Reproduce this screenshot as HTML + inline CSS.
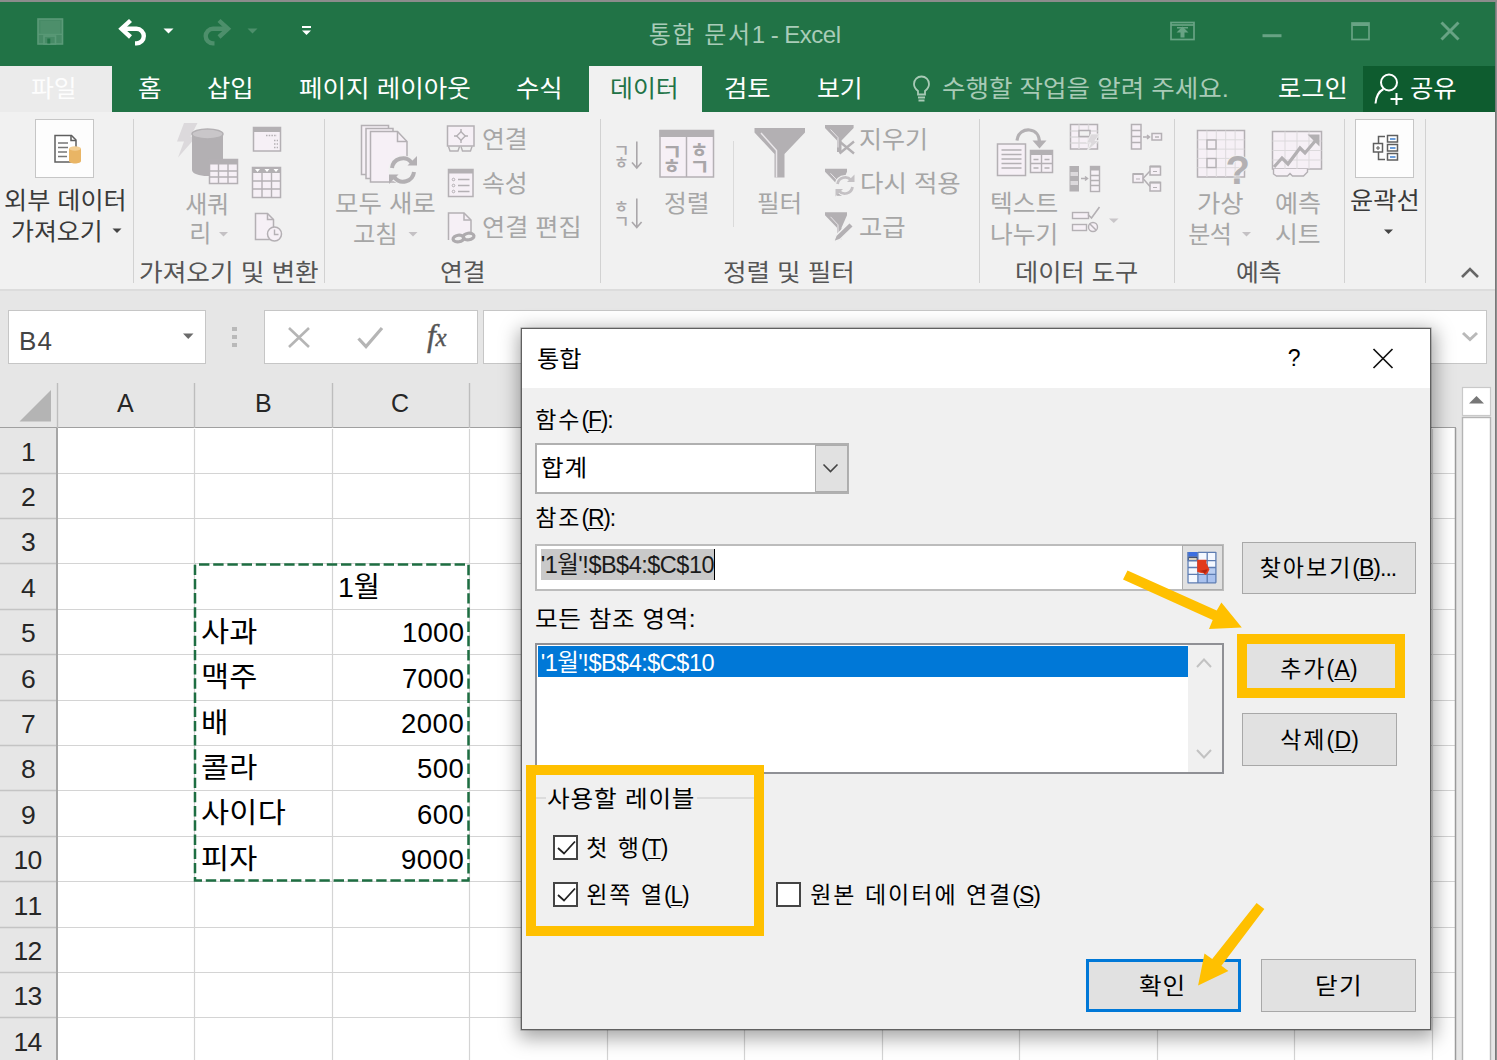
<!DOCTYPE html>
<html lang="ko">
<head>
<meta charset="utf-8">
<title>통합 문서1 - Excel</title>
<style>
*{box-sizing:border-box;margin:0;padding:0}
html,body{width:1497px;height:1060px;overflow:hidden}
body{position:relative;background:#e6e6e6;font-family:"Liberation Sans","Noto Sans CJK KR",sans-serif;color:#262626}
.abs{position:absolute}
.t{position:absolute;white-space:nowrap;line-height:1}
u{text-decoration:underline;text-underline-offset:2px;text-decoration-thickness:1.300px}
.h{letter-spacing:2px}
#topline{left:0;top:0;width:1497px;height:2px;background:#8c8c8c}
#title{left:0;top:2px;width:1497px;height:110px;background:#217346}
#filetab{left:0;top:66px;width:112px;height:46px;background:#ebebeb}
#datatab{left:589px;top:66px;width:113px;height:47px;background:#f1f1f1}
#share{left:1363px;top:66px;width:132px;height:46px;background:#0e5c2f}
#ribbon{left:0;top:112px;width:1497px;height:177px;background:#f1f1f1}
#ribbonline{left:0;top:289px;width:1497px;height:1.500px;background:#dcdcdc}
.sep{position:absolute;top:119px;width:1px;height:164px;background:#d2d2d2}
.box{position:absolute;background:#fff;border:1px solid #c6c6c6}
#grid{left:58px;top:428px;width:1398px;height:632px;background:#fff}
.vl{position:absolute;width:1px;background:#d4d4d4;top:428px;height:632px}
.hl{position:absolute;height:1px;background:#d4d4d4;left:58px;width:1398px}
.hvl{position:absolute;width:1px;background:#c3c3c3;top:384px;height:44px}
.hhl{position:absolute;height:1px;background:#c3c3c3;left:0;width:57px}
#dlg{left:521px;top:328px;width:910px;height:702px;background:#f0f0f0;border:1px solid #606060;box-shadow:0 0 0 .600px rgba(0,0,0,.28),1px 5px 18px 3px rgba(0,0,0,.36)}
#dlgtitle{left:522px;top:329px;width:908px;height:59px;background:#fff}
.btn{position:absolute;background:#e1e1e1;border:1.500px solid #a8a8a8}
.hi{position:absolute;border:8px solid #ffc000}
.chk{position:absolute;width:26px;height:26px;background:#fff;border:1.500px solid #333}
</style>
</head>
<body>
<div class="abs" id="title"></div>
<div class="abs" id="topline"></div>
<div class="abs" id="filetab"></div>
<div class="abs" id="datatab"></div>
<div class="abs" id="share"></div>
<svg class="abs" style="left:30px;top:14px" width="300" height="40" viewBox="0 0 300 40">
  <rect x="8" y="5" width="24.500" height="25" fill="#478a66" stroke="#5b9a78" stroke-width="1.600"/>
  <rect x="10.500" y="7" width="19.500" height="12.500" fill="#4d8f6b"/>
  <path d="M8 20.300h24.500" stroke="#5b9a78" stroke-width="1.200"/>
  <rect x="14" y="22" width="11.500" height="8" fill="#478a66" stroke="#5b9a78" stroke-width="1.600"/>
  <rect x="17.300" y="24.500" width="3" height="5" fill="#217346"/>
  <g fill="none" stroke="#fff" stroke-width="4.400" stroke-linejoin="miter">
    <path d="M100.500 6.500 L91.500 14.800 L100.500 23" />
    <path d="M93 14.800 H106.500 a7.300 7.300 0 0 1 0 14.600 H105" />
  </g>
  <path d="M133.500 14.500h10l-5 5z" fill="#fff"/>
  <g fill="none" stroke="#4d8f6b" stroke-width="4.400">
    <path d="M189 6.500 L198 14.800 L189 23" />
    <path d="M196.500 14.800 H183 a7.300 7.300 0 0 0 0 14.600 H184.500" />
  </g>
  <path d="M217.500 14.500h10l-5 5z" fill="#4d8f6b"/>
  <rect x="272" y="12" width="9" height="2" fill="#fff"/>
  <path d="M272 16.500h9l-4.500 4.500z" fill="#fff"/>
</svg>
<svg class="abs" style="left:1160px;top:14px" width="320" height="40" viewBox="0 0 320 40">
  <g fill="none" stroke="#68a384" stroke-width="1.700">
    <rect x="11" y="8.500" width="23" height="17"/>
    <path d="M11 11h23"/>
    <path d="M102.500 21.700h19" stroke-width="3"/>
    <rect x="192" y="9" width="17" height="16.500"/>
    <path d="M192 10.500h17" stroke-width="3"/>
    <path d="M281.500 8.500 l17 17 M298.500 8.500 l-17 17" stroke-width="3"/>
  </g>
  <path d="M22.500 12.500l6 6h-4v5h-4v-5h-4z" fill="#68a384"/>
  <rect x="17" y="13" width="11" height="1.500" fill="#68a384"/>
</svg>
<svg class="abs" style="left:908px;top:72px" width="28" height="34" viewBox="0 0 28 34">
  <g fill="none" stroke="#a8cab6" stroke-width="1.800">
    <path d="M10 22.500v-3.500c-2.500-2-4-4-4-7a7.500 7.500 0 0 1 15 0c0 3-1.500 5-4 7v3.500z"/>
    <path d="M10 25.500h7M10.500 28.500h6"/>
  </g>
</svg>
<svg class="abs" style="left:1372px;top:70px" width="36" height="38" viewBox="0 0 36 38">
  <g fill="none" stroke="#fff" stroke-width="2">
    <circle cx="17" cy="12.500" r="8"/>
    <path d="M11.500 19 C6 22 4 27 3.500 33.500"/>
    <path d="M24.500 23v12M18.500 29h12"/>
  </g>
</svg>
<div class="t" style="left:648.7px;top:23.2px;font-size:24px;color:#a9ccb8;letter-spacing:-0.50px;"><span style="letter-spacing:1.600px">통합 문서</span>1 - Excel</div><div class="t" style="left:31.2px;top:76.7px;font-size:24px;color:#fdfdfd;letter-spacing:0.00px;transform:scaleX(1.034);transform-origin:0 50%;">파일</div><div class="t" style="left:138.2px;top:76.7px;font-size:24px;color:#fff;letter-spacing:1.00px;transform:scaleX(1.070);transform-origin:0 50%;">홈</div><div class="t" style="left:207.2px;top:76.7px;font-size:24px;color:#fff;letter-spacing:0.00px;transform:scaleX(1.057);transform-origin:0 50%;">삽입</div><div class="t" style="left:299.2px;top:76.7px;font-size:24px;color:#fff;letter-spacing:0.00px;transform:scaleX(1.065);transform-origin:0 50%;">페이지 레이아웃</div><div class="t" style="left:516.2px;top:76.7px;font-size:24px;color:#fff;letter-spacing:0.00px;transform:scaleX(1.057);transform-origin:0 50%;">수식</div><div class="t" style="left:610.2px;top:76.7px;font-size:24px;color:#217346;letter-spacing:0.00px;transform:scaleX(1.037);transform-origin:0 50%;">데이터</div><div class="t" style="left:724.2px;top:76.7px;font-size:24px;color:#fff;letter-spacing:0.00px;transform:scaleX(1.057);transform-origin:0 50%;">검토</div><div class="t" style="left:817.2px;top:76.7px;font-size:24px;color:#fff;letter-spacing:0.00px;transform:scaleX(1.034);transform-origin:0 50%;">보기</div><div class="t" style="left:942.2px;top:76.7px;font-size:24px;color:#a8cab6;letter-spacing:0.00px;transform:scaleX(1.064);transform-origin:0 50%;">수행할 작업을 알려 주세요.</div><div class="t" style="left:1278.2px;top:76.7px;font-size:24px;color:#fff;letter-spacing:0.00px;transform:scaleX(1.052);transform-origin:0 50%;">로그인</div><div class="t" style="left:1410.2px;top:76.7px;font-size:24px;color:#fff;letter-spacing:0.00px;transform:scaleX(1.057);transform-origin:0 50%;">공유</div><div class="abs" id="ribbon"></div>
<div class="abs" id="ribbonline"></div>
<div class="sep" style="left:133px"></div>
<div class="sep" style="left:324px"></div>
<div class="sep" style="left:600px"></div>
<div class="sep" style="left:979px"></div>
<div class="sep" style="left:1174px"></div>
<div class="sep" style="left:1344px"></div>
<div class="sep" style="left:1425px"></div>
<div class="abs" style="left:733px;top:141px;width:1px;height:86px;background:#dadada"></div>
<div class="box" style="left:35px;top:119px;width:59px;height:59px;background:#fdfdfd"></div>
<div class="box" style="left:1355px;top:119px;width:59px;height:59px;background:#fdfdfd"></div>
<svg class="abs" style="left:0;top:0" width="1497" height="300" viewBox="0 0 1497 300" font-family="Liberation Sans, Noto Sans CJK KR, sans-serif">
<g fill="none" stroke="#5f5f5f" stroke-width="1.500">
<path d="M55 135.500h16.500l4.500 4.500v22h-21z" fill="#fff"/>
<path d="M71 135.500v5h5"/>
<path d="M58 143h10M58 147.500h10M58 152h9M58 156.500h9" stroke="#777" stroke-width="1.400"/>
</g>
<path d="M69 148.500v12.500c0 1.500 2.700 2.500 6 2.500s6-1 6-2.500v-12.500z" fill="#e9b565"/>
<ellipse cx="75" cy="148.500" rx="6" ry="2.200" fill="#f3cf94"/>
<path d="M184 123h13.500l-7 13.500h6l-18.500 21l6-16h-7z" fill="#dcd9dc"/>
<path d="M192 134v36c0 3.500 7 6 15.500 6s15.500-2.500 15.500-6v-36z" fill="#b3b0b3"/>
<ellipse cx="207.500" cy="134" rx="15.500" ry="5" fill="#c9c6c9" stroke="#b3b0b3" stroke-width="1.500"/>
<rect x="209.500" y="159.500" width="28" height="24" fill="#f6f0f6" stroke="#b4b0b4" stroke-width="1.500"/>
<rect x="209.500" y="159.500" width="28" height="5" fill="#b3b0b3"/>
<path d="M209.500 171h28M209.500 177h28M218.500 164v19.500M228 164v19.500" stroke="#b4b0b4" stroke-width="1.400"/>
<rect x="253.500" y="127.500" width="27" height="23.500" fill="#f6f0f6" stroke="#b4b0b4" stroke-width="1.500"/>
<rect x="253.500" y="127.500" width="27" height="4.500" fill="#b3b0b3"/>
<path d="M266 135.500h11M274 140.500h4M274 144h4M274 147.500h4" stroke="#b4b0b4" stroke-width="1.400" stroke-dasharray="1.500 1.200"/>
<rect x="252.500" y="167.500" width="28" height="30" fill="#f6f0f6" stroke="#b4b0b4" stroke-width="1.500"/>
<rect x="252.500" y="167.500" width="28" height="5.500" fill="#b3b0b3"/>
<path d="M252.500 181h28M252.500 189h28M262 173v24.500M271.500 173v24.500" stroke="#b4b0b4" stroke-width="1.400"/>
<path d="M255 169h5l-2.500 3zM264.500 169h5l-2.500 3zM273.500 169h5l-2.500 3z" fill="#fff"/>
<path d="M255.500 213.500h12l6 6v20h-18z" fill="#f6f0f6" stroke="#b4b0b4" stroke-width="1.500"/>
<path d="M267.500 213.500v6h6" fill="none" stroke="#b4b0b4" stroke-width="1.500"/>
<circle cx="274.500" cy="234" r="7" fill="#f6f0f6" stroke="#b4b0b4" stroke-width="1.500"/>
<path d="M274.500 229.500v5h4" fill="none" stroke="#b4b0b4" stroke-width="1.400"/>
<path d="M361.500 125.500h27v49h-27z" fill="#f6f0f6" stroke="#b4b0b4" stroke-width="1.500"/>
<path d="M366 128.500h27v50h-27z" fill="#f6f0f6" stroke="#b4b0b4" stroke-width="1.500"/>
<path d="M370.500 131.500h27l9.500 10v40.500h-36.500z" fill="#f6f0f6" stroke="#b4b0b4" stroke-width="1.500"/>
<path d="M397.500 131.500v10h9.500" fill="none" stroke="#b4b0b4" stroke-width="1.500"/>
<circle cx="403" cy="170" r="14.500" fill="#f1f1f1"/>
<g fill="none" stroke="#b3b0b3" stroke-width="4">
<path d="M392 168a11 11 0 0 1 19.500-5.500"/>
<path d="M414 172a11 11 0 0 1-19.500 5.500"/>
</g>
<path d="M407.500 165.500h9.500v-9.500z" fill="#b3b0b3"/>
<path d="M398.500 174.500h-9.500v9.500z" fill="#b3b0b3"/>
<rect x="447.500" y="126" width="26.500" height="20" fill="#f6f0f6" stroke="#b4b0b4" stroke-width="1.500"/>
<path d="M448.500 146.500l1.500 4.500h8l1.500-4.500M461 146.500l1.500 4.500h8l1.500-4.500" fill="none" stroke="#b4b0b4" stroke-width="1.400"/>
<path d="M461 129v14M454 136h14" stroke="#b4b0b4" stroke-width="1.400"/>
<rect x="458" y="133" width="6" height="6" fill="#f6f0f6" stroke="#b4b0b4" stroke-width="1.400" transform="rotate(45 461 136)"/>
<rect x="448.500" y="169.500" width="24.500" height="27" fill="#f6f0f6" stroke="#b4b0b4" stroke-width="1.500"/>
<rect x="448.500" y="169.500" width="24.500" height="4" fill="#b3b0b3"/>
<path d="M458 179.500h11.500M458 185.500h11.500M458 191.500h11.500" stroke="#b4b0b4" stroke-width="1.500"/>
<circle cx="453.500" cy="179.500" r="1.300" fill="none" stroke="#b4b0b4"/><circle cx="453.500" cy="185.500" r="1.300" fill="none" stroke="#b4b0b4"/><circle cx="453.500" cy="191.500" r="1.300" fill="none" stroke="#b4b0b4"/>
<path d="M448.500 240v-27h15.500l7 7v14" fill="#f6f0f6" stroke="#b4b0b4" stroke-width="1.500"/>
<path d="M464 213v7h7" fill="none" stroke="#b4b0b4" stroke-width="1.500"/>
<g fill="none" stroke="#aeabae" stroke-width="3.200">
<ellipse cx="458.500" cy="238.500" rx="5.500" ry="3.300" transform="rotate(-8 458.500 238.500)"/>
<ellipse cx="468.500" cy="236.500" rx="5.500" ry="3.300" transform="rotate(-8 468.500 236.500)"/>
</g>
<g fill="#aaa7aa" font-size="17.500" font-weight="500">
<text x="613.500" y="156.500">ㄱ</text><text x="613.800" y="169" font-size="16.500">ㅎ</text>
<text x="613.800" y="212.500" font-size="16.500">ㅎ</text><text x="613.500" y="227.500">ㄱ</text>
</g>
<g fill="none" stroke="#aaa7aa" stroke-width="1.600">
<path d="M636.800 141.500v26M632 162.500l4.800 5.500l4.800-5.500"/>
<path d="M636.800 198.500v29M632 222l4.800 5.500l4.800-5.500"/>
</g>
<rect x="660" y="130.500" width="53.500" height="46.500" fill="#f6f0f6" stroke="#b4b0b4" stroke-width="1.500"/>
<rect x="659.500" y="130" width="54.500" height="7" fill="#b3b0b3"/>
<path d="M686.500 137v40" stroke="#b4b0b4" stroke-width="1.500"/>
<g fill="#a9a6a9" font-size="22" font-weight="bold">
<text x="662" y="160">ㄱ</text><text x="662.500" y="174" font-size="20">ㅎ</text>
<text x="690" y="158" font-size="20">ㅎ</text><text x="689.500" y="174.500">ㄱ</text>
</g>
<path d="M754.500 128h50.500v4.500l-20.500 21.500v23.500h-10v-23.500l-20-21.500z" fill="#b3b0b3"/>
<path d="M761 133l15.500 17.500v27" fill="none" stroke="#e9e6e9" stroke-width="1.500"/>
<path d="M825 125.0h28.6v3l-12.1 12.500v11.500h-4.500v-11.500l-12-12.500z" fill="#b3b0b3"/>
<path d="M830.500 129.5l7.500 8v10" fill="none" stroke="#e9e6e9" stroke-width="1"/>
<path d="M839.500 141.500l14.500 12M854 141.500l-14.500 12" stroke="#b3b0b3" stroke-width="2.400" fill="none"/>
<path d="M825 168.8h22.0v3l-5.5 12.500v11.500h-4.500v-11.500l-12-12.500z" fill="#b3b0b3"/>
<path d="M830.500 173.3l7.500 8v10" fill="none" stroke="#e9e6e9" stroke-width="1"/>
<circle cx="845" cy="185.500" r="10.500" fill="#f1f1f1"/><g fill="none" stroke="#c4c1c4" stroke-width="2.800"><path d="M837.500 184a7.800 7.800 0 0 1 13.500-4"/><path d="M852.500 187a7.800 7.800 0 0 1-13.500 4"/></g>
<path d="M847 182h7.500v-7.500z" fill="#c4c1c4"/><path d="M843 189h-7.500v7.500z" fill="#c4c1c4"/>
<path d="M825 212.3h22.0v3l-5.5 12.500v11.500h-4.500v-11.500l-12-12.500z" fill="#b3b0b3"/>
<path d="M830.500 216.8l7.500 8v10" fill="none" stroke="#e9e6e9" stroke-width="1"/>
<path d="M833.500 242l2.500-6.500l13.500-13l4 4l-13.500 13z" fill="#b3b0b3" stroke="#f1f1f1" stroke-width="1.400"/>
<rect x="997.500" y="144" width="28" height="31.500" fill="#f6f0f6" stroke="#b4b0b4" stroke-width="1.500"/>
<path d="M1001.500 150h20M1001.500 154.500h20M1001.500 159h20M1001.500 163.500h20M1001.500 168h20" stroke="#b4b0b4" stroke-width="1.500"/>
<path d="M1017 140.500c1-8 7-11 12.500-10.500c6 .5 10 5 10 13" fill="none" stroke="#b3b0b3" stroke-width="3.200"/>
<path d="M1032.500 140.500h14l-7 8z" fill="#b3b0b3"/>
<rect x="1030.500" y="150.500" width="22" height="22" fill="#f6f0f6" stroke="#b4b0b4" stroke-width="1.500"/>
<rect x="1030.500" y="150.500" width="22" height="4.500" fill="#b3b0b3"/>
<path d="M1041.500 155v17.500M1030.500 163.500h22" stroke="#b4b0b4" stroke-width="1.400"/>
<path d="M1033.500 159.500h5M1044.500 159.500h5M1033.500 168h5M1044.500 168h5" stroke="#b4b0b4" stroke-width="1.400"/>
<rect x="1070.500" y="124.500" width="27" height="24.500" fill="#f6f0f6" stroke="#b4b0b4" stroke-width="1.500"/>
<path d="M1070.500 131h27M1070.500 137h27M1070.500 143h27M1079 124.500v24.500M1088.500 124.500v24.500" stroke="#dcd9dc" stroke-width="1.400"/>
<rect x="1079" y="130.500" width="11" height="6" fill="#f1f1f1" stroke="#b4b0b4" stroke-width="1.500"/>
<path d="M1091 134h9l-5 6.500h4l-12 10.500l4-8h-4.500z" fill="#dcd9dc" stroke="#f1f1f1" stroke-width=".800"/>
<rect x="1069.500" y="166" width="9.500" height="25.500" fill="#b3b0b3"/>
<path d="M1070.500 172h7.500v4h-7.500zM1070.500 181h7.500v4h-7.500z" fill="#dcd9dc"/>
<rect x="1090.500" y="166.500" width="9" height="25" fill="#f6f0f6" stroke="#b4b0b4" stroke-width="1.400"/>
<rect x="1090.500" y="166.500" width="9" height="4" fill="#b3b0b3"/>
<path d="M1090.500 175.500h9M1090.500 180.500h9M1090.500 185.500h9" stroke="#b4b0b4" stroke-width="1.400"/>
<path d="M1081 178.500h6M1085 176.500l2.500 2l-2.500 2" fill="none" stroke="#b4b0b4" stroke-width="1.500"/>
<rect x="1072.500" y="212.500" width="16" height="6" fill="#f6f0f6" stroke="#b4b0b4" stroke-width="1.400"/>
<rect x="1072.500" y="224.500" width="14" height="6" fill="#f6f0f6" stroke="#b4b0b4" stroke-width="1.400"/>
<path d="M1088 214.500l3.500 3.500l8-11" fill="none" stroke="#b4b0b4" stroke-width="1.600"/>
<circle cx="1093" cy="227" r="4.500" fill="#f6f0f6" stroke="#b4b0b4" stroke-width="1.400"/>
<path d="M1090 224l6 6" stroke="#b4b0b4" stroke-width="1.500"/>
<path d="M1109 218.500h9.500l-4.750 4.500z" fill="#c9c6c9"/>
<rect x="1131.500" y="124.500" width="9.500" height="24.500" fill="#f6f0f6" stroke="#b4b0b4" stroke-width="1.500"/>
<path d="M1131.500 130.500h9.500M1131.500 136.500h9.500M1131.500 142.500h9.500" stroke="#b4b0b4" stroke-width="1.400"/>
<path d="M1143 137h6M1147 135l2.500 2l-2.500 2" fill="none" stroke="#b4b0b4" stroke-width="1.500"/>
<rect x="1152" y="133.500" width="9.500" height="6.500" fill="#f6f0f6" stroke="#b4b0b4" stroke-width="1.500"/>
<path d="M1155 137h4" stroke="#b4b0b4" stroke-width="1.400"/>
<rect x="1133" y="174" width="10" height="8.500" fill="#f6f0f6" stroke="#b4b0b4" stroke-width="1.500"/>
<rect x="1150" y="166.500" width="10.500" height="8.500" fill="#f6f0f6" stroke="#b4b0b4" stroke-width="1.500"/>
<rect x="1150" y="182.500" width="10.500" height="8.500" fill="#f6f0f6" stroke="#b4b0b4" stroke-width="1.500"/>
<path d="M1133 174h10M1150 166.500h10.500M1150 182.500h10.500" stroke="#b3b0b3" stroke-width="2"/>
<path d="M1143 178.500l7-7.500M1143 178.500l7 8" stroke="#b4b0b4" stroke-width="1.500"/>
<path d="M1136 179h4M1153 171.500h4M1153 187.500h4" stroke="#b4b0b4" stroke-width="1.100"/>
<rect x="1197.500" y="130.500" width="47" height="46.500" fill="#f6f0f6" stroke="#b4b0b4" stroke-width="1.500"/>
<path d="M1206.9 130.500v46.500M1197.500 139.8h47M1216.3 130.500v46.500M1197.500 149.1h47M1225.7 130.500v46.500M1197.500 158.4h47M1235.1 130.500v46.500M1197.500 167.7h47" stroke="#dcd9dc" stroke-width="1" fill="none"/>
<rect x="1207" y="140" width="9" height="9" fill="#f6f0f6" stroke="#b4b0b4" stroke-width="1.400"/><rect x="1207" y="158.500" width="9" height="9" fill="#f6f0f6" stroke="#b4b0b4" stroke-width="1.400"/>
<text x="1225.500" y="183.500" font-size="40" font-weight="bold" fill="#b3b0b3" stroke="#f1f1f1" stroke-width="1.500" paint-order="stroke">?</text>
<rect x="1272.500" y="131.500" width="49" height="37.500" fill="#f6f0f6" stroke="#b4b0b4" stroke-width="1.500"/>
<path d="M1285 131.500v37.500M1297 131.500v37.500M1309 131.500v37.500M1272.500 141h49M1272.500 150.500h49M1272.500 160h49" stroke="#dcd9dc" stroke-width="1" fill="none"/>
<path d="M1273.500 169v5l3 2h11l2.500-2.500l2.500 2.500h11l4-4v-3" fill="#f6f0f6" stroke="#b4b0b4" stroke-width="1.400"/>
<path d="M1274 167l8-9l6 6l12-16l5 5l11-13" fill="none" stroke="#b3b0b3" stroke-width="3.200"/>
<path d="M1307.500 134.500h12v12z" fill="#b3b0b3"/>
<g fill="none" stroke="#5f5f5f" stroke-width="1.500">
<path d="M1385 136.500h-6.500v9M1378.500 150.500v9h6.500"/>
<rect x="1373.500" y="143.500" width="9" height="8.500" fill="#fff"/>
<path d="M1376 148h4M1378 146v4" stroke-width="1.100"/>
<rect x="1387.500" y="135.500" width="10" height="6.500" fill="#fff"/>
<rect x="1387.500" y="144.500" width="10" height="6.500" fill="#fff"/>
<rect x="1387.500" y="153.500" width="10" height="6.500" fill="#fff"/>
</g>
<path d="M1390 139h5.500M1390 148h5.500M1390 157h5.500" stroke="#3c7fcf" stroke-width="1.600"/>
<path d="M112.5 228.5h9l-4.500 4.500z" fill="#444"/>
<path d="M219.0 232.0h9l-4.500 4.500z" fill="#c4c1c4"/>
<path d="M408.5 232.0h9l-4.500 4.500z" fill="#c4c1c4"/>
<path d="M1242.0 232.0h9l-4.500 4.500z" fill="#c4c1c4"/>
<path d="M1384.0 229.5h9l-4.500 4.500z" fill="#444"/>
<path d="M1462 277l8-8l8 8" fill="none" stroke="#666" stroke-width="2.600"/>
</svg>
<div class="t" style="left:4.2px;top:188.7px;font-size:24px;color:#3a3a3a;letter-spacing:0.00px;transform:scaleX(1.048);transform-origin:0 50%;">외부 데이터</div><div class="t" style="left:11.2px;top:219.7px;font-size:24px;color:#3a3a3a;letter-spacing:0.00px;transform:scaleX(1.038);transform-origin:0 50%;">가져오기</div><div class="t" style="left:185.2px;top:192.7px;font-size:24px;color:#a6a6a6;letter-spacing:-3.50px;">새 쿼</div><div class="t" style="left:189.2px;top:222.2px;font-size:24px;color:#a6a6a6;letter-spacing:-2.50px;">리</div><div class="t" style="left:139.2px;top:260.7px;font-size:24px;color:#555;letter-spacing:0.00px;transform:scaleX(1.070);transform-origin:0 50%;">가져오기 및 변환</div><div class="t" style="left:335.2px;top:191.7px;font-size:24px;color:#a6a6a6;letter-spacing:0.00px;transform:scaleX(1.060);transform-origin:0 50%;">모두 새로</div><div class="t" style="left:353.2px;top:222.7px;font-size:24px;color:#a6a6a6;letter-spacing:0.00px;transform:scaleX(1.012);transform-origin:0 50%;">고침</div><div class="t" style="left:482.2px;top:127.7px;font-size:24px;color:#a6a6a6;letter-spacing:0.00px;transform:scaleX(1.034);transform-origin:0 50%;">연결</div><div class="t" style="left:482.2px;top:171.7px;font-size:24px;color:#a6a6a6;letter-spacing:0.00px;transform:scaleX(1.034);transform-origin:0 50%;">속성</div><div class="t" style="left:482.2px;top:215.7px;font-size:24px;color:#a6a6a6;letter-spacing:0.00px;transform:scaleX(1.049);transform-origin:0 50%;">연결 편집</div><div class="t" style="left:440.2px;top:260.7px;font-size:24px;color:#555;letter-spacing:0.00px;transform:scaleX(1.034);transform-origin:0 50%;">연결</div><div class="t" style="left:664.2px;top:191.7px;font-size:24px;color:#a6a6a6;letter-spacing:0.00px;transform:scaleX(1.034);transform-origin:0 50%;">정렬</div><div class="t" style="left:756.7px;top:191.7px;font-size:24px;color:#a6a6a6;letter-spacing:0.00px;transform:scaleX(1.023);transform-origin:0 50%;">필터</div><div class="t" style="left:859.2px;top:127.7px;font-size:24px;color:#a6a6a6;letter-spacing:0.00px;transform:scaleX(1.044);transform-origin:0 50%;">지우기</div><div class="t" style="left:860.2px;top:171.7px;font-size:24px;color:#a6a6a6;letter-spacing:0.00px;transform:scaleX(1.060);transform-origin:0 50%;">다시 적용</div><div class="t" style="left:859.2px;top:215.7px;font-size:24px;color:#a6a6a6;letter-spacing:0.00px;transform:scaleX(1.057);transform-origin:0 50%;">고급</div><div class="t" style="left:723.2px;top:260.7px;font-size:24px;color:#555;letter-spacing:0.00px;transform:scaleX(1.064);transform-origin:0 50%;">정렬 및 필터</div><div class="t" style="left:990.2px;top:191.7px;font-size:24px;color:#a6a6a6;letter-spacing:0.00px;transform:scaleX(1.029);transform-origin:0 50%;">텍스트</div><div class="t" style="left:990.2px;top:222.7px;font-size:24px;color:#a6a6a6;letter-spacing:0.00px;transform:scaleX(1.029);transform-origin:0 50%;">나누기</div><div class="t" style="left:1015.2px;top:260.7px;font-size:24px;color:#555;letter-spacing:0.00px;transform:scaleX(1.052);transform-origin:0 50%;">데이터 도구</div><div class="t" style="left:1196.7px;top:191.7px;font-size:24px;color:#a6a6a6;letter-spacing:0.00px;transform:scaleX(1.057);transform-origin:0 50%;">가상</div><div class="t" style="left:1188.2px;top:222.7px;font-size:24px;color:#a6a6a6;letter-spacing:-0.50px;">분석</div><div class="t" style="left:1274.7px;top:191.7px;font-size:24px;color:#a6a6a6;letter-spacing:0.00px;transform:scaleX(1.045);transform-origin:0 50%;">예측</div><div class="t" style="left:1275.2px;top:222.7px;font-size:24px;color:#a6a6a6;letter-spacing:0.00px;transform:scaleX(1.034);transform-origin:0 50%;">시트</div><div class="t" style="left:1236.2px;top:260.7px;font-size:24px;color:#555;letter-spacing:0.00px;transform:scaleX(1.034);transform-origin:0 50%;">예측</div><div class="t" style="left:1350.2px;top:188.7px;font-size:24px;color:#3a3a3a;letter-spacing:0.00px;transform:scaleX(1.052);transform-origin:0 50%;">윤곽선</div><div class="box" style="left:8px;top:310px;width:198px;height:54px"></div>
<div class="box" style="left:264px;top:310px;width:214px;height:54px"></div>
<div class="box" style="left:483px;top:310px;width:1003.500px;height:54px"></div>
<svg class="abs" style="left:0;top:300px" width="1497" height="80" viewBox="0 300 1497 80">
<path d="M183 333.500h10.500l-5.250 5.500z" fill="#6a6a6a"/>
<path d="M232 327h5v4h-5zM232 335h5v4h-5zM232 343h5v4h-5z" fill="#b9b9b9"/>
<path d="M289 328l20 19M309 328l-20 19" fill="none" stroke="#b5b5b5" stroke-width="2.600"/>
<path d="M358.500 338.500l7.500 8l16-18.500" fill="none" stroke="#b5b5b5" stroke-width="3.200"/>
<path d="M1463 333l7 6.500l7-6.500" fill="none" stroke="#b9b9b9" stroke-width="3"/>
</svg>
<div class="t" style="left:19.1px;top:328.3px;font-size:26px;color:#444;letter-spacing:1.00px;">B4</div><div class="t" style="left:427px;top:319px;font-size:32px;color:#555;font-family:'Liberation Serif',serif;font-style:italic;letter-spacing:-0.500px;-webkit-text-stroke:0.400px #555">f<span style="font-size:25px">x</span></div>
<div class="abs" style="left:0;top:427px;width:1456px;height:2px;background:#a0a0a0"></div>
<div class="abs" id="grid"></div>
<div class="abs" style="left:0;top:428px;width:57px;height:632px;background:#e6e6e6"></div>
<div class="abs" style="left:56px;top:428px;width:2px;height:632px;background:#a6a6a6"></div>
<svg class="abs" style="left:0;top:380px" width="1497" height="680" viewBox="0 380 1497 680">
<path d="M19.500 421.500h31.500v-31.500z" fill="#b4b4b4"/>
<path d="M194.5 429V1060M332.5 429V1060M469.5 429V1060M607.5 429V1060M744.5 429V1060M882.5 429V1060M1019.5 429V1060M1157.5 429V1060M1294.5 429V1060M1432.5 429V1060M58 473.5H1455M58 518.5H1455M58 563.5H1455M58 609.5H1455M58 654.5H1455M58 700.5H1455M58 745.5H1455M58 790.5H1455M58 836.5H1455M58 881.5H1455M58 927.5H1455M58 972.5H1455M58 1017.5H1455" stroke="#d4d4d4" stroke-width="1.200" fill="none"/>
<path d="M57.5 383V428M194.5 383V428M332.5 383V428M469.5 383V428" stroke="#bdbdbd" stroke-width="1.400" fill="none"/>
<path d="M0 473.5H56M0 518.5H56M0 563.5H56M0 609.5H56M0 654.5H56M0 700.5H56M0 745.5H56M0 790.5H56M0 836.5H56M0 881.5H56M0 927.5H56M0 972.5H56M0 1017.5H56" stroke="#c4c4c4" stroke-width="1.400" fill="none"/>
<path d="M1455.500 428V1060" stroke="#9b9b9b" stroke-width="1.500"/>
<rect x="1462.500" y="387.500" width="28" height="28" fill="#fff" stroke="#c9c9c9" stroke-width="1.200"/>
<path d="M1469 403.500h15l-7.500-7.500z" fill="#777"/>
<rect x="1462.500" y="417.500" width="28" height="650" fill="#fff" stroke="#b4b4b4" stroke-width="1.400"/>

<rect x="195" y="564.500" width="273.500" height="316" fill="none" stroke="#1e6e42" stroke-width="2.500" stroke-dasharray="10.400 3.800" stroke-dashoffset="-4"/>
</svg>
<div class="t" style="left:117.1px;top:390.8px;font-size:25px;color:#262626;letter-spacing:1.00px;">A</div><div class="t" style="left:255.1px;top:390.8px;font-size:25px;color:#262626;letter-spacing:1.00px;">B</div><div class="t" style="left:391.1px;top:390.8px;font-size:25px;color:#262626;letter-spacing:-0.25px;">C</div><div class="t" style="left:21.1px;top:438.5px;font-size:26.5px;color:#262626;letter-spacing:0.00px;">1</div><div class="t" style="left:21.1px;top:483.9px;font-size:26.5px;color:#262626;letter-spacing:0.00px;">2</div><div class="t" style="left:21.1px;top:529.3px;font-size:26.5px;color:#262626;letter-spacing:0.00px;">3</div><div class="t" style="left:21.1px;top:574.7px;font-size:26.5px;color:#262626;letter-spacing:0.00px;">4</div><div class="t" style="left:21.1px;top:620.1px;font-size:26.5px;color:#262626;letter-spacing:0.00px;">5</div><div class="t" style="left:21.1px;top:665.5px;font-size:26.5px;color:#262626;letter-spacing:0.00px;">6</div><div class="t" style="left:21.1px;top:710.9px;font-size:26.5px;color:#262626;letter-spacing:0.00px;">7</div><div class="t" style="left:21.1px;top:756.3px;font-size:26.5px;color:#262626;letter-spacing:0.00px;">8</div><div class="t" style="left:21.1px;top:801.7px;font-size:26.5px;color:#262626;letter-spacing:0.00px;">9</div><div class="t" style="left:13.6px;top:847.1px;font-size:26.5px;color:#262626;letter-spacing:-0.75px;">10</div><div class="t" style="left:13.6px;top:892.5px;font-size:26.5px;color:#262626;letter-spacing:1.25px;">11</div><div class="t" style="left:13.6px;top:937.9px;font-size:26.5px;color:#262626;letter-spacing:-0.75px;">12</div><div class="t" style="left:13.6px;top:983.3px;font-size:26.5px;color:#262626;letter-spacing:-0.75px;">13</div><div class="t" style="left:13.6px;top:1028.7px;font-size:26.5px;color:#262626;letter-spacing:-0.75px;">14</div><div class="t" style="left:338.0px;top:574.1px;font-size:28px;color:#000;letter-spacing:0.00px;transform:scaleX(1.015);transform-origin:0 50%;">1월</div><div class="t" style="left:201.0px;top:617.7px;font-size:28.5px;color:#000;letter-spacing:0.25px;transform:scaleX(1.070);transform-origin:0 50%;">사과</div><div class="t" style="left:402.0px;top:619.1px;font-size:27.5px;color:#000;letter-spacing:0.25px;">1000</div><div class="t" style="left:201.0px;top:663.1px;font-size:28.5px;color:#000;letter-spacing:0.25px;transform:scaleX(1.070);transform-origin:0 50%;">맥주</div><div class="t" style="left:402.0px;top:664.5px;font-size:27.5px;color:#000;letter-spacing:0.25px;">7000</div><div class="t" style="left:201.0px;top:708.5px;font-size:28.5px;color:#000;letter-spacing:0.00px;transform:scaleX(1.048);transform-origin:0 50%;">배</div><div class="t" style="left:401.0px;top:709.9px;font-size:27.5px;color:#000;letter-spacing:0.50px;">2000</div><div class="t" style="left:201.0px;top:753.9px;font-size:28.5px;color:#000;letter-spacing:0.25px;transform:scaleX(1.070);transform-origin:0 50%;">콜라</div><div class="t" style="left:417.0px;top:755.3px;font-size:27.5px;color:#000;letter-spacing:0.50px;">500</div><div class="t" style="left:201.0px;top:799.3px;font-size:28.5px;color:#000;letter-spacing:0.25px;transform:scaleX(1.070);transform-origin:0 50%;">사이다</div><div class="t" style="left:417.0px;top:800.7px;font-size:27.5px;color:#000;letter-spacing:0.50px;">600</div><div class="t" style="left:201.0px;top:844.7px;font-size:28.5px;color:#000;letter-spacing:0.25px;transform:scaleX(1.070);transform-origin:0 50%;">피자</div><div class="t" style="left:401.0px;top:846.1px;font-size:27.5px;color:#000;letter-spacing:0.50px;">9000</div><div class="abs" style="left:1495px;top:2px;width:2px;height:1058px;background:linear-gradient(90deg,#6e6e6e,#9a9a9a)"></div>
<div class="abs" id="dlg"></div>
<div class="abs" id="dlgtitle"></div>
<div class="abs" style="left:534.500px;top:442.500px;width:314px;height:51px;background:#fff;border:2px solid #b0b0b0"></div>
<div class="abs" style="left:815px;top:444.500px;width:32.500px;height:47px;background:#e1e1e1;border:1.500px solid #adadad"></div>
<div class="abs" style="left:534.500px;top:544px;width:689px;height:46.500px;background:#fff;border:2px solid #bcbcbc"></div>
<div class="abs" style="left:1181.500px;top:544.500px;width:41.500px;height:45.500px;background:#e1e1e1;border:1.500px solid #adadad"></div>
<div class="abs" style="left:540.500px;top:549px;width:173.500px;height:30.500px;background:#c9c9c9"></div>
<div class="abs" style="left:713.500px;top:549px;width:1.500px;height:31px;background:#000"></div>
<div class="abs" style="left:534.500px;top:643px;width:689px;height:130.500px;background:#fff;border:2px solid #8f9095"></div>
<div class="abs" style="left:1188px;top:644.500px;width:34px;height:127.500px;background:#f0f0f0"></div>
<div class="abs" style="left:538px;top:646px;width:649.500px;height:30.500px;background:#0078d7"></div>
<div class="btn" style="left:1242px;top:541.500px;width:174px;height:52.500px"></div>
<div class="btn" style="left:1242px;top:639px;width:158px;height:53px"></div>
<div class="btn" style="left:1242px;top:713px;width:155px;height:53px"></div>
<div class="btn" style="left:1086px;top:958.500px;width:155px;height:53.500px;border:3px solid #0078d7"></div>
<div class="btn" style="left:1261px;top:958.500px;width:155px;height:53px"></div>
<div class="abs" style="left:1237px;top:634px;width:168px;height:63.500px;border:10px solid #ffc000"></div>
<div class="abs" style="left:526px;top:765px;width:238px;height:171px;border:10px solid #ffc000"></div>
<div class="abs" style="left:536px;top:797px;width:10px;height:1.500px;background:#dcdcdc"></div>
<div class="abs" style="left:697px;top:797px;width:57px;height:1.500px;background:#dcdcdc"></div>
<div class="abs" style="left:553px;top:834.5px;width:25px;height:25px;background:#fff;border:2px solid #454545"></div>
<div class="abs" style="left:553px;top:881.5px;width:25px;height:25px;background:#fff;border:2px solid #454545"></div>
<div class="abs" style="left:776px;top:881.5px;width:25px;height:25px;background:#fff;border:2px solid #454545"></div>
<svg class="abs" style="left:500px;top:320px" width="960" height="720" viewBox="500 320 960 720">
<path d="M558 848l6 5.500l11-12" fill="none" stroke="#222" stroke-width="1.800"/>
<path d="M558 895l6 5.500l11-12" fill="none" stroke="#222" stroke-width="1.800"/>
<path d="M823.500 464.500l7 7l7-7" fill="none" stroke="#444" stroke-width="1.600"/>
<path d="M1197 667l7-7.500l7 7.500" fill="none" stroke="#c2c2c2" stroke-width="2"/>
<path d="M1197 750l7 7.500l7-7.500" fill="none" stroke="#c2c2c2" stroke-width="2"/>
<path d="M1373.500 349l19 19M1392.500 349l-19 19" fill="none" stroke="#111" stroke-width="1.700"/>
<g>
<rect x="1187.600" y="552" width="28.300" height="30.800" fill="#f4f8ff"/>
<rect x="1197.900" y="574.300" width="18" height="8.500" fill="#a9c1ee"/>
<rect x="1207.200" y="567.500" width="8.700" height="7" fill="#b9cdf0"/>
<rect x="1187.600" y="552" width="10.300" height="4.600" fill="#3d6fe0"/>
<rect x="1188.300" y="557.200" width="9" height="3.400" fill="#d9d3c0" stroke="#1f2f55" stroke-width="1.200"/>
<path d="M1187.600 560.600h28.300M1187.600 567.500h28.300M1187.600 574.300h28.300M1187.600 582.800h28.300M1197.900 552v30.800M1207.200 552v30.800M1188 552v30.800M1215.900 552v30.800M1197.900 552.300h18" stroke="#5e7db2" stroke-width="1.300" fill="none"/>
<path d="M1197.200 559.800h9.200v3.500l3 6.300l-1.600 3.200l-2.200 2.300l-2.100-1.800l-3.700-.6l-2.600-1z" fill="#e23a1c"/>
<path d="M1199 571l3.500.7l2.100 1.800l2.200-2.300l1-2z" fill="#b02410"/>
</g>
<path d="M1127.500 570.500L1216.700 610.600L1221.400 602.600L1241.800 627.600L1209 629.100L1212.700 620.100L1123 579.500Z" fill="#ffc000"/>
<path d="M1256.600 902.900L1264.300 909.100L1221.400 965.700L1228.400 971.100L1198.100 985.500L1204.500 953.500L1212.200 959.100Z" fill="#ffc000"/>
</svg>
<div class="t" style="left:537.2px;top:347.7px;font-size:23px;color:#000;letter-spacing:0.00px;transform:scaleX(1.054);transform-origin:0 50%;">통합</div><div class="t" style="left:1287.7px;top:347.2px;font-size:23px;color:#000;letter-spacing:-2.25px;">?</div><div class="t" style="left:535.2px;top:408.7px;font-size:23px;color:#000;letter-spacing:-1.25px;"><span class="h">함수</span>(<u>F</u>):</div><div class="t" style="left:540.7px;top:456.7px;font-size:23px;color:#000;letter-spacing:0.75px;transform:scaleX(1.070);transform-origin:0 50%;">합계</div><div class="t" style="left:535.2px;top:507.2px;font-size:23px;color:#000;letter-spacing:-1.25px;"><span class="h">참조</span>(<u>R</u>):</div><div class="t" style="left:540.7px;top:554.0px;font-size:23.5px;color:#1a1a1a;letter-spacing:-0.50px;">'1월'!$B$4:$C$10</div><div class="t" style="left:535.2px;top:608.2px;font-size:23px;color:#000;letter-spacing:0.50px;transform:scaleX(1.070);transform-origin:0 50%;">모든 참조 영역:</div><div class="t" style="left:540.7px;top:652.0px;font-size:23.5px;color:#fff;letter-spacing:-0.50px;">'1월'!$B$4:$C$10</div><div class="t" style="left:1259.7px;top:557.2px;font-size:23px;color:#000;letter-spacing:-1.00px;"><span class="h">찾아보기</span>(<u>B</u>)...</div><div class="t" style="left:1280.2px;top:657.7px;font-size:23px;color:#000;letter-spacing:0.25px;"><span class="h">추가</span>(<u>A</u>)</div><div class="t" style="left:1280.2px;top:729.2px;font-size:23px;color:#000;letter-spacing:0.25px;"><span class="h">삭제</span>(<u>D</u>)</div><div class="t" style="left:547.2px;top:787.9px;font-size:23px;color:#000;letter-spacing:0.75px;transform:scaleX(1.070);transform-origin:0 50%;">사용할 레이블</div><div class="t" style="left:586.2px;top:837.2px;font-size:23px;color:#000;letter-spacing:-1.00px;"><span class="h">첫 행</span>(<u>T</u>)</div><div class="t" style="left:586.2px;top:884.2px;font-size:23px;color:#000;letter-spacing:-1.25px;"><span class="h">왼쪽 열</span>(<u>L</u>)</div><div class="t" style="left:810.2px;top:884.2px;font-size:23px;color:#000;letter-spacing:-1.00px;"><span class="h">원본 데이터에 연결</span>(<u>S</u>)</div><div class="t" style="left:1139.2px;top:975.0px;font-size:23px;color:#000;letter-spacing:0.75px;transform:scaleX(1.070);transform-origin:0 50%;">확인</div><div class="t" style="left:1314.7px;top:974.8px;font-size:23px;color:#000;letter-spacing:1.25px;transform:scaleX(1.070);transform-origin:0 50%;">닫기</div></body>
</html>
